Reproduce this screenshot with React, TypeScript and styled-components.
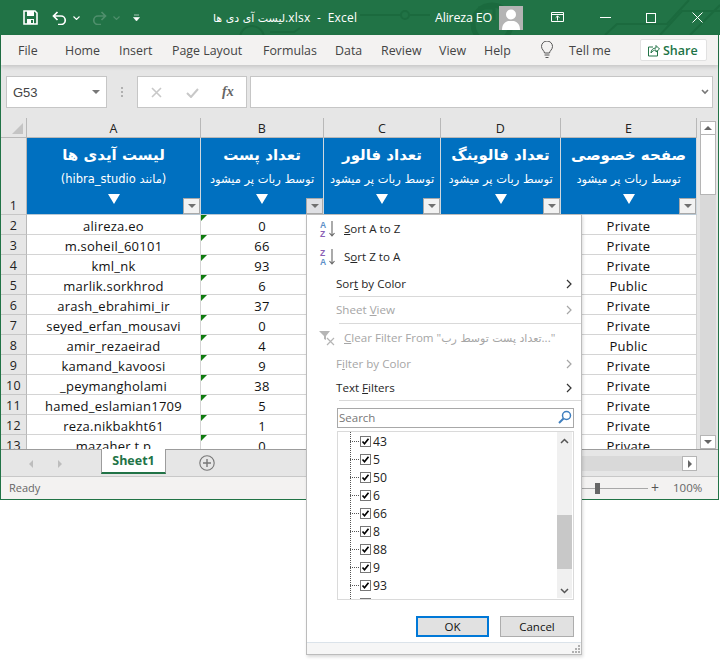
import React from "react";
import styled, { createGlobalStyle } from "styled-components";

const UI = `"Open Sans", "DejaVu Sans", sans-serif`;
const CELL = `"Open Sans", "DejaVu Sans", sans-serif`;
const FA = `"DejaVu Sans", sans-serif`;

const Global = createGlobalStyle`
  html, body { margin: 0; padding: 0; background: #fff; width: 720px; height: 670px; overflow: hidden; }
  * { box-sizing: border-box; }
  #root { width: 720px; height: 670px; position: relative; font-family: ${UI}; }
`;

const Window = styled.div`
  width: 719px; height: 500px; display: flex; flex-direction: column;
  border: 1px solid #217346; border-top: 0; background: #e6e6e6;
`;
const TitleBar = styled.div`
  height: 35px; margin: 0 -2px 0 -1px; background: #217346; color: #fff; display: flex; align-items: center;
  position: relative; flex: none; font-size: 12px; overflow: hidden;
`;
const Pattern = styled.svg`position: absolute; left: 0; top: 0; width: 720px; height: 35px;`;
const QuickIcon = styled.svg<{ $ml: number }>`
  margin-left: ${p => p.$ml}px; flex: none; position: relative; display: block;
`;
const TitleText = styled.div`
  position: relative; margin-left: 73px; width: 147px; white-space: pre; font-family: ${UI}; font-size: 12px; letter-spacing: .2px;
`;
const Fa = styled.span`font-family: ${FA}; font-size: 11px;`;
const UserName = styled.div`position: relative; margin-left: 75px; font-size: 12.5px; letter-spacing: -.2px; width: 64px;`;
const Avatar = styled.svg`position: relative; flex: none; display: block;`;

const Ribbon = styled.div`
  height: 30px; flex: none; background: #f3f2f1; display: flex; align-items: center; position: relative;
  font-size: 12.4px; color: #444; box-shadow: 0 2px 4px rgba(0,0,0,.14); z-index: 1;
`;
const Tab = styled.span<{ $x: number }>`position: absolute; left: ${p => p.$x}px; top: 7px; line-height: 17px; white-space: nowrap;`;
const ShareButton = styled.div`
  position: absolute; left: 639px; top: 4px; width: 67px; height: 22px; background: #fff; border: 1px solid #e1e1e1; border-radius: 2px;
  display: flex; align-items: center; gap: 3px; padding-left: 7px; color: #217346; font-size: 12.5px; font-weight: 600;
`;
const BulbIcon = styled.svg`position: absolute; left: 539px; top: 6px;`;

const FormulaArea = styled.div`
  height: 53px; flex: none; display: flex; align-items: flex-start; padding: 11px 5px 0 5px; background: #e6e6e6;
`;
const NameBox = styled.div`
  width: 102px; height: 32px; background: #fff; border: 1px solid #c6c6c6; display: flex; align-items: center; justify-content: space-between;
  padding: 0 6px 0 6px; font-size: 13px; color: #444; font-family: "Liberation Sans", sans-serif;
`;
const Caret = styled.span`
  width: 0; height: 0; border-left: 4px solid transparent; border-right: 4px solid transparent; border-top: 4px solid #777;
`;
const Grip = styled.div`
  width: 2px; height: 10px; margin: 11px 14px 0 14px; border-left: 2px dotted #b0b0b0; flex: none;
`;
const FxBox = styled.div`
  width: 110px; height: 32px; background: #fff; border: 1px solid #c6c6c6; display: flex; align-items: center; padding-left: 13px; gap: 24px; flex: none;
`;
const FxLabel = styled.span`font-family: "Liberation Serif", serif; font-style: italic; font-weight: 700; color: #666; font-size: 14px; margin-left: -1px;`;
const FormulaInput = styled.div`
  width: 463px; height: 32px; margin-left: 3px; background: #fff; border: 1px solid #c6c6c6; display: flex; align-items: center; justify-content: flex-end; padding-right: 3px; flex: none;
`;

const SheetWrap = styled.div`height: 331px; flex: none; display: flex; background: #e6e6e6;`;
const Grid = styled.div`
  width: 696px; height: 331px; overflow: hidden; display: grid;
  grid-template-columns: 26px 174px 123px 117px 120px 136px;
  grid-auto-rows: 20px; grid-template-rows: 20px 77px;
  font-family: ${CELL}; font-size: 13px; letter-spacing: .25px; color: #111; background: #fff;
`;
const Corner = styled.div`
  background: #e6e6e6; border-right: 1px solid #b8b8b8; border-bottom: 1px solid #b8b8b8; position: relative;
  &::after { content: ""; position: absolute; right: 3px; bottom: 3px; border-left: 11px solid transparent; border-bottom: 11px solid #c4c4c4; }
`;
const ColHead = styled.div`
  background: #e6e6e6; border-right: 1px solid #b8b8b8; border-bottom: 1px solid #b8b8b8; display: flex; align-items: center; justify-content: center; color: #222;
  font-size: 12.5px; padding-top: 1px;
`;
const RowHead = styled.div<{ $tall?: boolean }>`
  background: #e6e6e6; border-right: 1px solid #b8b8b8; border-bottom: 1px solid #c6c6c6; display: flex; align-items: ${p => p.$tall ? "flex-end" : "center"};
  justify-content: center; color: #222; font-size: 12.5px; padding-top: ${p => p.$tall ? "0" : "2px"};
`;
const HeadCell = styled.div`
  background: #0070c0; color: #fff; border-right: 1px solid #cfd8df; border-bottom: 1px solid #b8c8d4; position: relative; letter-spacing: 0;
  display: flex; flex-direction: column; align-items: center; padding-top: 5px; font-family: ${FA};
`;
const HeadTitle = styled.div`direction: rtl; font-size: 15px; font-weight: 700; line-height: 24px; white-space: nowrap;`;
const HeadSub = styled.div`direction: rtl; font-size: 11.5px; line-height: 16px; margin-top: 4px; white-space: nowrap;`;
const HeadArrow = styled.div`
  width: 0; height: 0; margin-top: 7px; border-left: 6px solid transparent; border-right: 6px solid transparent; border-top: 10px solid #fff;
`;
const FilterBtn = styled.div<{ $active?: boolean }>`
  position: absolute; right: 0; bottom: 0; width: 17px; height: 16px; background: ${p => p.$active ? "#dfe0e4" : "#f2f2f2"}; border: 1px solid #a9a9a9;
  display: flex; align-items: center; justify-content: center;
  &::after { content: ""; border-left: 4px solid transparent; border-right: 4px solid transparent; border-top: 4px solid #707070; }
`;
const Cell = styled.div<{ $flag?: boolean }>`
  border-right: 1px solid #d4d4d4; border-bottom: 1px solid #d4d4d4; display: flex; align-items: center; justify-content: center; position: relative; white-space: nowrap; padding-top: 2px;
  ${p => p.$flag ? `&::before { content: ""; position: absolute; left: 0; top: 0; border-top: 6px solid #107c10; border-right: 6px solid transparent; }` : ""}
`;

const VScroll = styled.div`
  width: 21px; flex: none; display: flex; flex-direction: column; align-items: center; padding: 3px 0 0 1px; background: #e6e6e6; margin-left: 0;
`;
const ScrollBtn = styled.div<{ $up?: boolean }>`
  width: 16px; height: 14px; background: #fff; border: 1px solid #b5b5b5; flex: none; display: flex; align-items: center; justify-content: center;
  &::after { content: ""; border-left: 4px solid transparent; border-right: 4px solid transparent;
    ${p => p.$up ? "border-bottom: 4px solid #666;" : "border-top: 4px solid #666;"} }
`;
const VThumb = styled.div`width: 16px; height: 60px; background: #fff; border: 1px solid #b5b5b5; border-top: 0; flex: none;`;
const VTrack = styled.div`width: 16px; flex: 1; background: #d9d9d9;`;

const TabBar = styled.div`
  height: 28px; flex: none; border-top: 1px solid #9c9c9c; border-bottom: 1px solid #c8c8c8; background: #e6e6e6; display: flex; align-items: flex-start; font-size: 12.5px;
  position: relative;
`;
const NavArrow = styled.span<{ $ml: number; $left?: boolean }>`
  margin: 10px 0 0 ${p => p.$ml}px; border-top: 4px solid transparent; border-bottom: 4px solid transparent;
  ${p => p.$left ? "border-right: 4px solid #bdbdbd;" : "border-left: 4px solid #bdbdbd;"}
`;
const SheetTab = styled.div`
  margin: -1px 0 0 39px; width: 65px; height: 25px; background: #fff; color: #217346; font-weight: 700; font-size: 12.5px;
  border-left: 1px solid #9c9c9c; border-right: 1px solid #9c9c9c; border-bottom: 2px solid #217346; display: flex; align-items: center; justify-content: center;
  position: relative;
`;
const PlusIcon = styled.svg`margin: 5px 0 0 33px; flex: none; display: block;`;
const HTrack = styled.div`margin: 6px 0 0 91px; width: 376px; height: 15px; background: #d9d9d9; flex: none;`;
const HBtn = styled.div`
  width: 15px; height: 15px; margin-top: 6px; background: #fff; border: 1px solid #b5b5b5; display: flex; align-items: center; justify-content: center; flex: none;
  &::after { content: ""; border-top: 4px solid transparent; border-bottom: 4px solid transparent; border-left: 4px solid #666; }
`;

const StatusBar = styled.div`
  flex: 1; background: #f3f2f1; display: flex; align-items: center; padding: 0 0 2px 8px; font-size: 11px; color: #666; position: relative;
`;
const ZoomLine = styled.div`position: absolute; left: 581px; top: 11px; width: 66px; height: 1px; background: #a8a8a8;`;
const ZoomThumb = styled.div`position: absolute; left: 594px; top: 6px; width: 5px; height: 11px; background: #666;`;
const ZoomPlus = styled.span`position: absolute; left: 650px; top: 2px; font-size: 14px; color: #555; line-height: 18px;`;
const ZoomPct = styled.span`position: absolute; left: 672px; top: 3px; font-size: 11.5px; color: #666; line-height: 16px;`;

const Popup = styled.div`
  position: absolute; left: 306px; top: 214px; width: 276px; height: 441px; background: #fff; border: 1px solid #bcbcbc; box-shadow: 1px 2px 3px rgba(0,0,0,.15);
  font-family: ${UI}; font-size: 11.6px; color: #222; display: flex; flex-direction: column; z-index: 5;
`;
const MenuRow = styled.div<{ $h: number; $pad: number; $off?: boolean }>`
  height: ${p => p.$h}px; flex: none; display: flex; align-items: center; position: relative; padding: 0 0 1px ${p => p.$pad}px; white-space: pre;
  color: ${p => p.$off ? "#a6a6a6" : "#262626"};
`;
const MenuIcon = styled.svg`position: absolute; left: 12px; top: 50%; transform: translateY(-50%);`;
const MenuArrow = styled.svg`position: absolute; right: 9px; top: 50%; transform: translateY(-50%);`;
const Sep = styled.div`height: 1px; margin-left: 32px; background: #d9d9d9; flex: none;`;
const SearchBox = styled.div`
  margin: 7px 7px 0 30px; height: 20px; border: 1px solid #a8a8a8; display: flex; align-items: center; justify-content: space-between; padding: 0 1px 2px 1px; color: #777; flex: none; font-size: 11.5px;
`;
const TreeList = styled.div`
  margin: 3px 7px 0 30px; height: 169px; border: 1px solid #dadada; position: relative; overflow: hidden; flex: none; font-size: 12.2px;
`;
const TreeLine = styled.div`position: absolute; left: 12px; top: 0; bottom: 0; border-left: 1px dotted #555;`;
const TreeRow = styled.div`height: 18px; display: flex; align-items: center; padding-left: 12px; gap: 2px;`;
const TreeDash = styled.span`width: 9px; border-top: 1px dotted #555; flex: none; margin-right: -1px;`;
const Check = styled.svg`display: block; flex: none;`;
const ListBar = styled.div`
  position: absolute; right: 1px; top: 0; bottom: 1px; width: 15px; background: #f0f0f0; display: flex; flex-direction: column; align-items: center;
`;
const ListThumb = styled.div`position: absolute; left: 0; top: 83px; width: 15px; height: 54px; background: #c8c8c8;`;
const ListChevron = styled.svg<{ $bottom?: boolean }>`position: absolute; left: 3px; ${p => p.$bottom ? "bottom: 4px;" : "top: 6px;"}`;
const Buttons = styled.div`display: flex; justify-content: flex-end; gap: 11px; margin: 16px 7px 0 0; flex: none;`;
const Btn = styled.div<{ $primary?: boolean }>`
  width: ${p => p.$primary ? 73 : 74}px; height: 21px; background: #e1e1e1; border: ${p => p.$primary ? "2px solid #0078d7" : "1px solid #adadad"};
  display: flex; align-items: center; justify-content: center; font-size: 11.5px; color: #111;
`;
const PopFooter = styled.div`
  margin-top: auto; height: 12px; flex: none; background: #f6f6f6; border-top: 1px solid #dbe3ea; position: relative;
`;
const GripDots = styled.svg`position: absolute; right: 1px; bottom: 1px;`;

const rows: [string, string, string][] = [
  ["alireza.eo", "0", "Private"], ["m.soheil_60101", "66", "Private"], ["kml_nk", "93", "Private"],
  ["marlik.sorkhrod", "6", "Public"], ["arash_ebrahimi_ir", "37", "Private"], ["seyed_erfan_mousavi", "0", "Private"],
  ["amir_rezaeirad", "4", "Public"], ["kamand_kavoosi", "9", "Private"], ["_peymangholami", "38", "Private"],
  ["hamed_eslamian1709", "5", "Private"], ["reza.nikbakht61", "1", "Private"], ["mazaher.t.p", "0", "Private"],
];
const SUB = "توسط ربات پر میشود";
const heads = [
  { t: "لیست آیدی ها", s: "(مانند hibra_studio)" },
  { t: "تعداد پست", s: SUB, active: true },
  { t: "تعداد فالور", s: SUB },
  { t: "تعداد فالوینگ", s: SUB },
  { t: "صفحه خصوصی", s: SUB },
];
const tabs: [string, number][] = [["File", 17], ["Home", 64], ["Insert", 118], ["Page Layout", 171], ["Formulas", 262], ["Data", 334], ["Review", 380], ["View", 438], ["Help", 483], ["Tell me", 568]];
const items = ["43", "5", "50", "6", "66", "8", "88", "9", "93", ""];

const ChevronR = ({ off }: { off?: boolean }) => (
  <MenuArrow width="6" height="10" viewBox="0 0 6 10"><path d="M1 1l4 4-4 4" fill="none" stroke={off ? "#a6a6a6" : "#333"} strokeWidth="1.2" /></MenuArrow>
);
const SortIcon = ({ top, bottom, c1, c2 }: { top: string; bottom: string; c1: string; c2: string }) => (
  <MenuIcon width="18" height="18" viewBox="0 0 18 18">
    <text x="1" y="8" fontSize="8.5" fontWeight="700" fontFamily="Liberation Sans" fill={c1}>{top}</text>
    <text x="1" y="16.5" fontSize="8.5" fontWeight="700" fontFamily="Liberation Sans" fill={c2}>{bottom}</text>
    <path d="M13 1v15M10.5 13l2.5 3 2.5-3" fill="none" stroke="#666" strokeWidth="1.1" />
  </MenuIcon>
);

export default function App() {
  return (
    <>
      <Global />
      <Window>
        <TitleBar>
          <Pattern viewBox="0 0 720 35">
            <g fill="none" stroke="#1b6a3e" strokeWidth="2">
              <path d="M360 15h40M410 15h20" />
              <circle cx="405" cy="15" r="4" />
              <circle cx="492" cy="24" r="19" strokeWidth="5" />
              <path d="M478 8l16 0 0 12" strokeWidth="3" />
              <path d="M605 35l12-11h50l22-24M660 35l22-24h38M690 35l30-30" />
              <circle cx="252" cy="38" r="12" />
              <path d="M270 32h24l6 -4" />
            </g>
          </Pattern>
          <QuickIcon $ml={23} width="15" height="15" viewBox="0 0 15 15">
            <path d="M1 1h11l2 2v11H1z" fill="none" stroke="#fff" strokeWidth="1.6" />
            <rect x="4" y="1" width="7" height="5" fill="#fff" />
            <rect x="4" y="9" width="7" height="5" fill="#fff" />
            <rect x="8" y="10" width="2" height="3" fill="#217346" />
          </QuickIcon>
          <QuickIcon $ml={14} width="15" height="14" viewBox="0 0 15 14">
            <path d="M5.500 1L1.500 5l4 4M2 5h7a4.200 4.200 0 0 1 0 8.500H6" fill="none" stroke="#fff" strokeWidth="1.700" />
          </QuickIcon>
          <QuickIcon $ml={6} width="7" height="4" viewBox="0 0 7 4"><path d="M.5.5L3.500 3.500 6.500.5" fill="none" stroke="#fff" strokeWidth="1.100" /></QuickIcon>
          <QuickIcon $ml={12} width="15" height="14" viewBox="0 0 15 14">
            <path d="M9.500 1l4 4-4 4M13 5H6a4.200 4.200 0 0 0 0 8.500h3" fill="none" stroke="#4f8f6c" strokeWidth="1.700" />
          </QuickIcon>
          <QuickIcon $ml={6} width="7" height="4" viewBox="0 0 7 4"><path d="M.5.5L3.500 3.500 6.500.5" fill="none" stroke="#4f8f6c" strokeWidth="1.100" /></QuickIcon>
          <QuickIcon $ml={13} width="7" height="8" viewBox="0 0 7 8"><path d="M1 1h5M0.500 3.500h6L3.500 7z" fill="#fff" stroke="#fff" strokeWidth=".6" /></QuickIcon>
          <TitleText><Fa>لیست آی دی ها</Fa>.xlsx  -  Excel</TitleText>
          <UserName>Alireza EO</UserName>
          <Avatar width="24" height="24" viewBox="0 0 24 24">
            <rect width="24" height="24" fill="#b4b4b4" />
            <circle cx="12" cy="8.500" r="5" fill="#fff" />
            <path d="M3 24c0-6 3-8 6-9h6c3 1 6 3 6 9z" fill="#fff" />
          </Avatar>
          <QuickIcon $ml={28} width="14" height="11" viewBox="0 0 14 11">
            <path d="M.5.5h12v9H.5zM.5 2.500h12M6.500 8.500V4M4.700 5.700l1.800-1.800 1.800 1.800" fill="none" stroke="#fff" strokeWidth="1" />
          </QuickIcon>
          <QuickIcon $ml={35} width="11" height="1" viewBox="0 0 11 1"><rect width="11" height="1" fill="#fff" /></QuickIcon>
          <QuickIcon $ml={35} width="10" height="10" viewBox="0 0 10 10"><rect x=".5" y=".5" width="9" height="9" fill="none" stroke="#fff" /></QuickIcon>
          <QuickIcon $ml={36} width="11" height="11" viewBox="0 0 11 11"><path d="M.5.5l10 10M10.500.5l-10 10" stroke="#fff" /></QuickIcon>
        </TitleBar>

        <Ribbon>
          {tabs.map(([t, x]) => <Tab key={t} $x={x}>{t}</Tab>)}
          <BulbIcon width="14" height="18" viewBox="0 0 14 18">
            <path d="M4.500 12c0-2-3-3.500-3-6.500a5.500 5.500 0 0 1 11 0c0 3-3 4.500-3 6.500zM4.500 14h5M5.500 16.500h3" fill="none" stroke="#555" strokeWidth="1" />
          </BulbIcon>
          <ShareButton>
            <svg width="12" height="13" viewBox="0 0 12 13">
              <path d="M5 3H.5v9h9V7M3 9c0-3 2-5 5-5V1.500L11.500 5 8 8V6C6 6 4.500 7 3 9z" fill="none" stroke="#217346" strokeWidth="1" />
            </svg>
            Share
          </ShareButton>
        </Ribbon>

        <FormulaArea>
          <NameBox>G53<Caret /></NameBox>
          <Grip />
          <FxBox>
            <svg width="11" height="11" viewBox="0 0 11 11"><path d="M1 1l9 9M10 1l-9 9" stroke="#c8c8c8" strokeWidth="1.600" /></svg>
            <svg width="13" height="11" viewBox="0 0 13 11"><path d="M1 6l4 4 7-8" fill="none" stroke="#c8c8c8" strokeWidth="2" /></svg>
            <FxLabel>fx</FxLabel>
          </FxBox>
          <FormulaInput>
            <svg width="8" height="6" viewBox="0 0 8 6"><path d="M1 1l3 3 3-3" fill="none" stroke="#777" strokeWidth="1.600" /></svg>
          </FormulaInput>
        </FormulaArea>

        <SheetWrap>
          <Grid>
            <Corner />
            {["A", "B", "C", "D", "E"].map(c => <ColHead key={c}>{c}</ColHead>)}
            <RowHead $tall>1</RowHead>
            {heads.map((h, i) => (
              <HeadCell key={i}>
                <HeadTitle>{h.t}</HeadTitle>
                <HeadSub>{h.s}</HeadSub>
                <HeadArrow />
                <FilterBtn $active={h.active} />
              </HeadCell>
            ))}
            {rows.map((r, i) => (
              <React.Fragment key={i}>
                <RowHead>{i + 2}</RowHead>
                <Cell>{r[0]}</Cell>
                <Cell $flag>{r[1]}</Cell>
                <Cell />
                <Cell />
                <Cell>{r[2]}</Cell>
              </React.Fragment>
            ))}
          </Grid>
          <VScroll>
            <ScrollBtn $up />
            <VThumb />
            <VTrack />
            <ScrollBtn />
          </VScroll>
        </SheetWrap>

        <TabBar>
          <NavArrow $ml={28} $left />
          <NavArrow $ml={25} />
          <SheetTab>Sheet1</SheetTab>
          <PlusIcon width="16" height="16" viewBox="0 0 16 16">
            <circle cx="8" cy="8" r="7.200" fill="none" stroke="#777" strokeWidth="1.100" />
            <path d="M8 4v8M4 8h8" stroke="#777" strokeWidth="1.400" />
          </PlusIcon>
          <HTrack />
          <HBtn />
        </TabBar>

        <StatusBar>
          Ready
          <ZoomLine />
          <ZoomThumb />
          <ZoomPlus>+</ZoomPlus>
          <ZoomPct>100%</ZoomPct>
        </StatusBar>
      </Window>

      <Popup>
        <MenuRow $h={28} $pad={37}>
          <SortIcon top="A" bottom="Z" c1="#5b8fc7" c2="#8a5fb5" />
          <span><u>S</u>ort A to Z</span>
        </MenuRow>
        <MenuRow $h={28} $pad={37}>
          <SortIcon top="Z" bottom="A" c1="#8a5fb5" c2="#5b8fc7" />
          <span>S<u>o</u>rt Z to A</span>
        </MenuRow>
        <MenuRow $h={25} $pad={29}>
          <span>Sor<u>t</u> by Color</span>
          <ChevronR />
        </MenuRow>
        <Sep />
        <MenuRow $h={26} $pad={29} $off>
          <span>Sheet <u>V</u>iew</span>
          <ChevronR off />
        </MenuRow>
        <Sep />
        <MenuRow $h={28} $pad={37} $off>
          <MenuIcon width="16" height="16" viewBox="0 0 16 16">
            <path d="M0 1h11L7 6v4L5 9V6z" fill="#b5b5b5" />
            <path d="M8 8l7 7M15 8l-7 7" stroke="#b5b5b5" strokeWidth="1.200" />
          </MenuIcon>
          <span><u>C</u>lear Filter From "<Fa>تعداد پست توسط رب</Fa>..."</span>
        </MenuRow>
        <MenuRow $h={24} $pad={29} $off>
          <span>F<u>i</u>lter by Color</span>
          <ChevronR off />
        </MenuRow>
        <MenuRow $h={24} $pad={29}>
          <span>Text <u>F</u>ilters</span>
          <ChevronR />
        </MenuRow>
        <Sep />
        <SearchBox>
          Search
          <svg width="14" height="14" viewBox="0 0 14 14">
            <circle cx="8.500" cy="5.500" r="4" fill="none" stroke="#3f7fbf" strokeWidth="1.500" />
            <path d="M5.500 8.500L1 13" stroke="#3f7fbf" strokeWidth="2" />
          </svg>
        </SearchBox>
        <TreeList>
          <TreeLine />
          {items.map((t, i) => (
            <TreeRow key={i}>
              <TreeDash />
              <Check width="11" height="11" viewBox="0 0 11 11">
                <rect x=".5" y=".5" width="10" height="10" fill="#fff" stroke="#777" />
                <path d="M2.500 5.500l2 2.200 4-5" fill="none" stroke="#000" strokeWidth="1.700" />
              </Check>
              <span>{t}</span>
            </TreeRow>
          ))}
          <ListBar>
            <ListChevron width="9" height="6" viewBox="0 0 9 6"><path d="M1 5l3.500-3.500L8 5" fill="none" stroke="#555" strokeWidth="1.500" /></ListChevron>
            <ListThumb />
            <ListChevron $bottom width="9" height="6" viewBox="0 0 9 6"><path d="M1 1l3.500 3.500L8 1" fill="none" stroke="#555" strokeWidth="1.500" /></ListChevron>
          </ListBar>
        </TreeList>
        <Buttons>
          <Btn $primary>OK</Btn>
          <Btn>Cancel</Btn>
        </Buttons>
        <PopFooter>
          <GripDots width="8" height="8" viewBox="0 0 8 8">
            <path d="M6 0h2v2H6zM6 3h2v2H6zM3 3h2v2H3zM0 6h2v2H0zM3 6h2v2H3zM6 6h2v2H6z" fill="#b0b0b0" />
          </GripDots>
        </PopFooter>
      </Popup>
    </>
  );
}
